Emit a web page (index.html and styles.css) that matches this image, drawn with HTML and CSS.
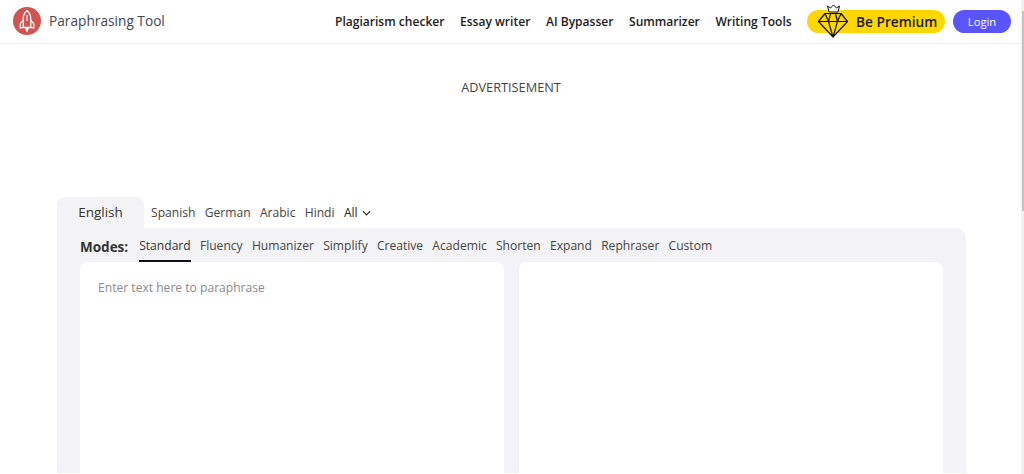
FILE: index.html
```html
<!DOCTYPE html>
<html lang="en">
<head>
<meta charset="utf-8">
<title>Paraphrasing Tool</title>
<link rel="stylesheet" href="styles.css">
</head>
<body>
<div class="page">
  <header class="topbar">
    <a class="brand">
      <svg class="logo" viewBox="0 0 28 28" width="28" height="28">
        <circle cx="14" cy="14" r="14" fill="#cf5552"/>
        <path d="M14 3.500c2.700 2.500 3.800 5.200 3.800 8.500v8.500h-7.600V12c0-3.300 1.100-6 3.800-8.500z" fill="none" stroke="#fff" stroke-width="1.300"/>
        <path d="M10.200 13L7.200 16.800V21l3-.5M17.800 13l3 3.800V21l-3-.5" fill="none" stroke="#fff" stroke-width="1.200"/>
        <path d="M12 21l2 4.500 2-4.500z" fill="#fff"/>
        <path d="M14 8v6" fill="none" stroke="#fff" stroke-width="1"/>
      </svg>
      <span class="brand-name">Paraphrasing Tool</span>
    </a>
    <nav class="nav">
      <a>Plagiarism checker</a>
      <a>Essay writer</a>
      <a>AI Bypasser</a>
      <a>Summarizer</a>
      <a>Writing Tools</a>
    </nav>
    <a class="premium">
      <svg class="gem" viewBox="0 0 30 34" width="30" height="34">
        <path d="M11 8L9.500 2l3 2L15.500 1l3 3 3-2L20 8z" fill="#fff" stroke="#111" stroke-width="1"/>
        <path d="M7 9.500h16l6.500 8L15 33 .5 17.500zM.5 17.500h29M7 9.500l3.500 8L15 33l4.500-15.500 3.500-8M10.500 17.500l2-8M19.500 17.500l-2-8" fill="none" stroke="#111" stroke-width="1.200" stroke-linejoin="round"/>
      </svg>
      <span>Be Premium</span>
    </a>
    <a class="login">Login</a>
  </header>
  <div class="ad">ADVERTISEMENT</div>
  <main class="tool">
    <div class="langs">
      <span class="lang-active">English</span>
      <span class="lang">Spanish</span>
      <span class="lang">German</span>
      <span class="lang">Arabic</span>
      <span class="lang">Hindi</span>
      <span class="lang-all">All
        <svg viewBox="0 0 10 6" width="9" height="6"><path d="M1 1l4 4 4-4" fill="none" stroke="#222" stroke-width="1.300"/></svg>
      </span>
    </div>
    <section class="panel">
      <div class="modes">
        <strong class="modes-label">Modes:</strong>
        <span class="mode active">Standard</span>
        <span class="mode">Fluency</span>
        <span class="mode">Humanizer</span>
        <span class="mode">Simplify</span>
        <span class="mode">Creative</span>
        <span class="mode">Academic</span>
        <span class="mode">Shorten</span>
        <span class="mode">Expand</span>
        <span class="mode">Rephraser</span>
        <span class="mode">Custom</span>
      </div>
      <div class="boxes">
        <div class="box input">Enter text here to paraphrase</div>
        <div class="box output"></div>
      </div>
    </section>
  </main>
  <div class="scrollbar"><div class="thumb"></div></div>
</div>
</body>
</html>
```
FILE: styles.css
```css
* { box-sizing: border-box; }
html, body { margin: 0; height: 100%; overflow: hidden; }
body { background: #fff; font-family: "Open Sans", "Noto Sans", sans-serif; color: #333; }
.page { position: relative; width: 1024px; height: 474px; overflow: hidden; }
.topbar { height: 44px; display: flex; align-items: center; padding-left: 13px; border-bottom: 1px solid #eeeeee; }
.brand { display: flex; align-items: center; gap: 8px; width: 322px; flex: none; margin-top: -1px; }
.logo { flex: none; }
.brand-name { font-size: 13.700px; color: #3c4654; margin-bottom: 2px; }
.nav { display: flex; gap: 15.600px; font-size: 12.050px; font-weight: 600; color: #1c1c1c; white-space: nowrap; width: 472px; flex: none; margin-top: -1px; }
.premium { width: 138px; height: 23px; flex: none; background: #ffd600; border-radius: 12px; display: flex; align-items: center; padding-left: 11px; gap: 8px; font-size: 13.700px; font-weight: 600; color: #1a1a1a; margin-top: -1px; }
.gem { flex: none; margin-top: -1px; }
.login { width: 58px; height: 23px; flex: none; margin-left: 8px; margin-top: -1px; background: #5a55fb; color: #fff; border-radius: 12px; font-size: 11.200px; display: flex; align-items: center; justify-content: center; }
.ad { height: 153px; padding: 34px 2px 0 0; text-align: center; font-size: 12.750px; color: #444; }
.tool { margin-left: 57px; width: 909px; }
.langs { display: flex; align-items: center; height: 31px; font-size: 12.100px; color: #444; }
.lang-active { width: 87px; height: 31px; background: #f3f3f6; border-radius: 8px 8px 0 0; font-size: 13.500px; color: #333; text-align: center; line-height: 31px; }
.lang { margin-right: 9.300px; }
.lang-active + .lang { margin-left: 7px; }
.lang-all { font-size: 12px; color: #222; display: flex; align-items: center; gap: 4px; }
.panel { background: #f3f3f6; border-radius: 0 10px 0 0; padding: 0 23px; height: 245px; }
.modes { display: flex; align-items: stretch; height: 34px; font-size: 12.100px; color: #444; }
.modes-label { font-size: 13.500px; font-weight: 700; color: #333; margin-right: 11px; line-height: 38px; }
.mode { margin-right: 9.200px; line-height: 35px; }
.mode.active { color: #333; border-bottom: 2px solid #111; }
.boxes { display: flex; gap: 15px; }
.box { height: 220px; background: #fff; border-radius: 8px; }
.input { width: 424px; padding: 17px 18px; font-size: 12.100px; color: #8a8a8a; }
.output { width: 424px; }
.scrollbar { position: absolute; top: 0; right: 0; bottom: 0; width: 3px; background: #f1f1f1; }
.thumb { margin: 11px 0 0 1px; height: 200px; background: #c4c4c4; }
```
